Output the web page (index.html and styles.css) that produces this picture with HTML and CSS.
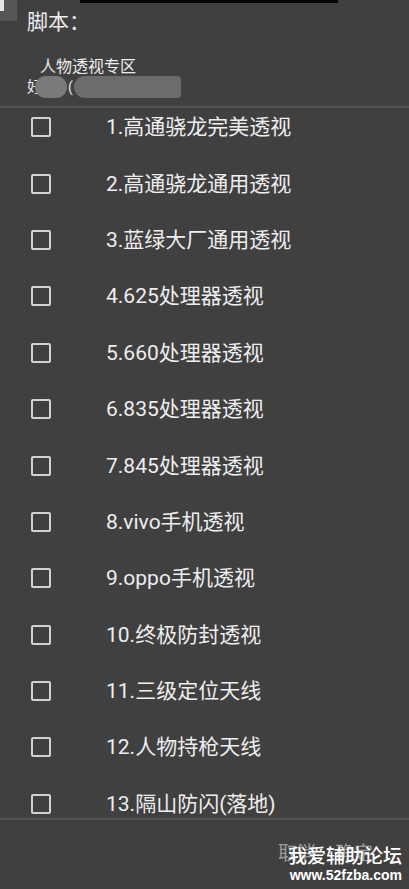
FILE: index.html
```html
<!DOCTYPE html>
<html>
<head>
<meta charset="utf-8">
<link rel="stylesheet" href="styles.css">
</head>
<body>
<div class="screen">
  <div class="topbar"></div>
  <div class="corner"><div class="corner-strip"></div></div>
  <header class="head">
    <div class="title">脚本：</div>
    <div class="subtitle">人物透视专区</div>
    <div class="masked">
      <span class="mchar">好</span>
      <span class="blob b1"></span>
      <span class="mchar2">(</span>
      <span class="blob b2"></span>
    </div>
  </header>
  <div class="sep"></div>
  <div class="list">
    <div class="inner">
      <div class="row"><span class="box"></span><span class="label">1.高通骁龙完美透视</span></div>
      <div class="row"><span class="box"></span><span class="label">2.高通骁龙通用透视</span></div>
      <div class="row"><span class="box"></span><span class="label">3.蓝绿大厂通用透视</span></div>
      <div class="row"><span class="box"></span><span class="label">4.625处理器透视</span></div>
      <div class="row"><span class="box"></span><span class="label">5.660处理器透视</span></div>
      <div class="row"><span class="box"></span><span class="label">6.835处理器透视</span></div>
      <div class="row"><span class="box"></span><span class="label">7.845处理器透视</span></div>
      <div class="row"><span class="box"></span><span class="label">8.vivo手机透视</span></div>
      <div class="row"><span class="box"></span><span class="label">9.oppo手机透视</span></div>
      <div class="row"><span class="box"></span><span class="label">10.终极防封透视</span></div>
      <div class="row"><span class="box"></span><span class="label">11.三级定位天线</span></div>
      <div class="row"><span class="box"></span><span class="label">12.人物持枪天线</span></div>
      <div class="row"><span class="box"></span><span class="label">13.隔山防闪(落地)</span></div>
    </div>
  </div>
  <div class="sep"></div>
  <footer class="foot">
    <span class="btn">取消</span>
    <span class="btn">确定</span>
    <div class="wm">
      <div class="wm1">我爱辅助论坛</div>
      <div class="wm2">www.52fzba.com</div>
    </div>
  </footer>
</div>
</body>
</html>
```
FILE: styles.css
```css
html, body {
  margin: 0;
  padding: 0;
  background: #404040;
}
.screen {
  position: relative;
  width: 409px;
  height: 889px;
  overflow: hidden;
  background: #404040;
  font-family: Roboto, "Noto Sans CJK SC", sans-serif;
  color: #ececec;
}
.topbar {
  position: absolute;
  left: 80px;
  top: 0;
  width: 258px;
  height: 3px;
  background: #050505;
}
.corner {
  position: absolute;
  left: 0;
  top: 0;
  width: 17px;
  height: 21px;
  background: #565656;
}
.corner-strip {
  width: 4px;
  height: 11px;
  background: #e6e6e6;
}
.head {
  height: 106px;
  padding: 10px 0 0 27px;
  box-sizing: border-box;
}
.title {
  font-size: 21px;
  line-height: 24px;
  height: 24px;
}
.subtitle {
  margin-top: 23px;
  margin-left: 13px;
  font-size: 16px;
  line-height: 20px;
}
.masked {
  display: flex;
  align-items: center;
  height: 22px;
  margin-top: -1px;
}
.mchar {
  font-size: 15px;
  line-height: 18px;
}
.mchar2 {
  font-size: 14px;
  line-height: 18px;
  margin-left: 1px;
  margin-right: 1px;
}
.blob {
  display: block;
  height: 22px;
  border-radius: 11px;
  filter: blur(0.6px);
}
.b1 { width: 32px; background: #7a7a7a; margin-left: -7px; }
.b2 { width: 107px; background: #6c6c6c; border-radius: 11px 4px 4px 11px; }
.sep {
  height: 2px;
  background: #545454;
}
.list {
  height: 710px;
  overflow: hidden;
}
.inner {
  margin-top: -9px;
}
.row {
  display: flex;
  align-items: center;
  height: 56.4px;
}
.box {
  width: 16px;
  height: 16px;
  border: 2px solid #d2d2d2;
  border-radius: 2px;
  margin-left: 31px;
}
.label {
  margin-left: 55px;
  font-size: 21px;
  line-height: 26px;
  color: #eeeeee;
}
.foot {
  position: relative;
  display: flex;
  justify-content: flex-end;
  align-items: center;
  gap: 19px;
  height: 69px;
  padding-right: 36px;
  box-sizing: border-box;
}
.btn {
  font-size: 19px;
  color: #9d9d9d;
  margin-top: -6px;
}
.wm {
  position: absolute;
  right: 7px;
  top: 23px;
  text-align: right;
}
.wm1 {
  font-size: 19px;
  line-height: 24px;
  color: #ffffff;
  font-family: "Noto Sans CJK SC", sans-serif;
  font-weight: 500;
}
.wm2 {
  font-family: "Liberation Sans", Arial, sans-serif;
  font-weight: bold;
  font-size: 14px;
  line-height: 16px;
  color: #ffffff;
}
```
